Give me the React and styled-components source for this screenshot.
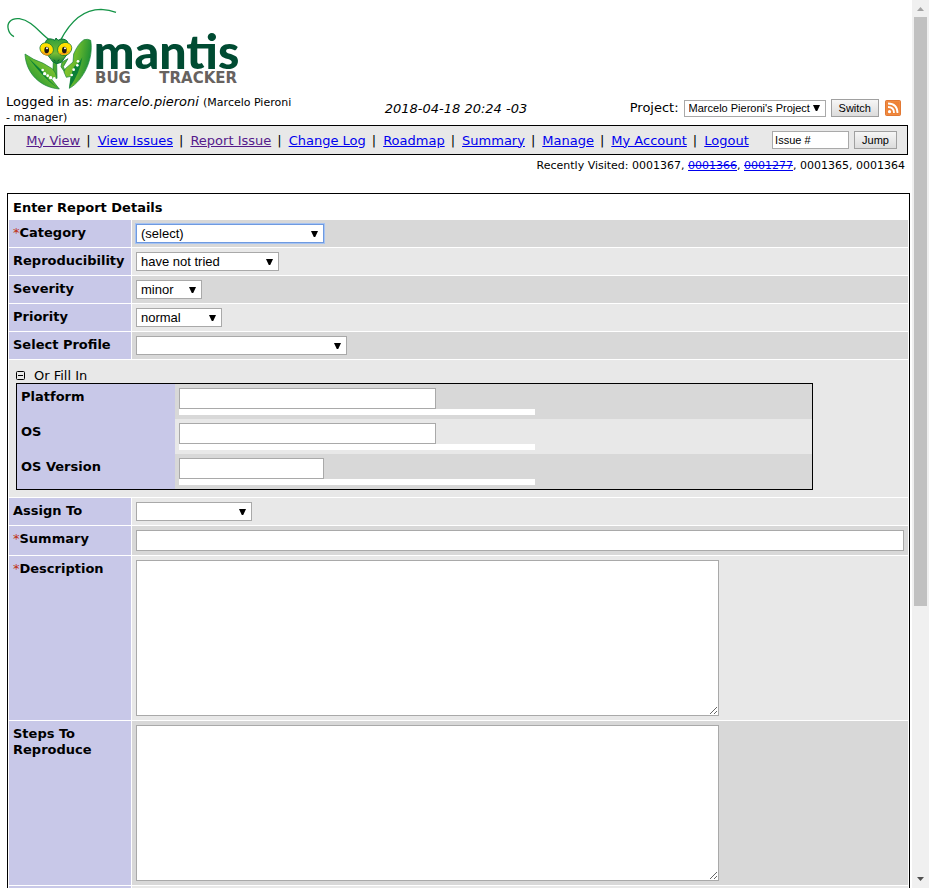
import React from "react";
import styled, { createGlobalStyle } from "styled-components";

const GlobalStyle = createGlobalStyle`
  *, *::before, *::after { box-sizing: border-box; }
  body {
    margin: 0;
    background: #fff;
    color: #000;
    font: 13px/16px Verdana, "DejaVu Sans", sans-serif;
  }
`;

const arrow =
  "url(\"data:image/svg+xml,%3Csvg xmlns='http://www.w3.org/2000/svg' width='7' height='6'%3E%3Cpath d='M0 0h7L4.2 6H2.800z'/%3E%3C/svg%3E\")";

const Shell = styled.div`
  display: flex;
  height: 100vh;
`;
const Pane = styled.div`
  flex: 1;
  min-width: 0;
  overflow: hidden auto;
  scrollbar-width: none;
`;
const Scrollbar = styled.div`
  flex: none;
  width: 17px;
  padding: 0 2px;
  background: #f0f0f0;
  display: flex;
  flex-direction: column;
`;
const ScrollArrow = styled.svg`
  flex: none;
  width: 13px;
  height: 17px;
  fill: ${(p) => p.$color};
`;
const ScrollTrack = styled.div`
  flex: 1;
`;
const ScrollThumb = styled.div`
  height: 69%;
  background: #c1c1c1;
`;

const LogoLink = styled.a`
  display: block;
  width: 236px;
  margin: 8px 6px 0;
`;
const LogoSvg = styled.svg`
  display: block;
  width: 236px;
  height: 84px;
`;
const LogoName = styled.text`
  font: 900 145px Lato, sans-serif;
  fill: #004b32;
`;
const LogoTag = styled.text`
  font: bold 45px "DejaVu Sans", sans-serif;
  fill: #67625f;
`;

const LoginBar = styled.div`
  display: grid;
  grid-template-columns: 33% 34% 33%;
  align-items: center;
  margin: 1px 4px 0;
  min-height: 31px;
`;
const LoginUser = styled.div`
  padding: 2px 8px 0 2px;
  line-height: 14px;
`;
const Small = styled.span`
  font-size: 11px;
`;
const LoginDate = styled.div`
  text-align: center;
  font-style: italic;
`;
const ProjectForm = styled.form`
  display: flex;
  align-items: center;
  justify-content: flex-end;
  gap: 5px;
  padding: 0 7px 2px 0;
  white-space: nowrap;
`;
const RssLink = styled.a`
  display: flex;
  padding-left: 1px;
`;

const NavBar = styled.nav`
  display: flex;
  align-items: center;
  height: 30px;
  margin: 0 4px;
  border: 1px solid #000;
  background: #e8e8e8;
`;
const NavLinks = styled.div`
  flex: 1;
  padding-top: 1px;
  text-align: center;
  white-space: nowrap;
`;
const NavLink = styled.a`
  color: ${(p) => (p.$visited ? "#551a8b" : "#0000ee")};
`;
const Divider = styled.span`
  margin: 0 7px 0 6px;
`;
const JumpForm = styled.form`
  display: flex;
  gap: 5px;
  padding: 0 10px 0 2px;
`;
const JumpInput = styled.input`
  width: 77px;
  height: 18px;
  padding: 0 2px;
  border: 1px solid #a9a9a9;
  font: 11px "Liberation Sans", Arial, sans-serif;
  color: #000;
`;
const Button = styled.button`
  height: 18px;
  padding: 0 7px;
  border: 1px solid #a0a0a0;
  background: linear-gradient(#f6f6f6, #dcdcdc);
  font: 11px/14px "Liberation Sans", Arial, sans-serif;
  color: #000;
`;

const Recent = styled.div`
  margin: 4px 7px 0;
  text-align: right;
  font-size: 11px;
  line-height: 14px;
`;
const Resolved = styled.a`
  color: #0000ee;
  text-decoration: underline line-through;
`;

const FormTable = styled.table`
  width: calc(100% - 9px);
  margin: 20px 2px 20px 7px;
  border: 1px solid #000;
  border-spacing: 1px;
  table-layout: fixed;
`;
const Title = styled.th`
  height: 24px;
  padding: 5px 4px 3px;
  text-align: left;
`;
const LabelCell = styled.th`
  width: ${(p) => p.$width || "122px"};
  padding: 5px 4px 4px;
  background: #c8c8e8;
  text-align: left;
  vertical-align: top;
`;
const ValueCell = styled.td`
  padding: 4px;
  background: ${(p) => (p.$dark ? "#d8d8d8" : "#e8e8e8")};
  vertical-align: top;
`;
const Required = styled.span`
  color: #c03010;
  font-weight: normal;
`;
const Select = styled.select`
  display: block;
  appearance: none;
  width: ${(p) => p.$width};
  height: ${(p) => (p.$small ? "17px" : "19px")};
  padding: 0 12px 0 4px;
  border: 1px solid ${(p) => (p.$focused ? "#6f9ae0" : "#a9a9a9")};
  border-radius: 0;
  background: #fff ${arrow} no-repeat right 5px center;
  box-shadow: ${(p) => (p.$focused ? "0 0 0 1px #a5c3f2" : "none")};
  font: ${(p) => (p.$small ? "11px" : "13px")} "Liberation Sans", Arial, sans-serif;
  color: #000;
`;
const TextInput = styled.input`
  display: block;
  width: ${(p) => p.$width};
  height: 21px;
  padding: 1px 3px;
  border: 1px solid #a9a9a9;
  font: 13px "Liberation Sans", Arial, sans-serif;
`;
const TextArea = styled.textarea`
  display: block;
  width: 583px;
  height: 156px;
  padding: 2px;
  border: 1px solid #a9a9a9;
  font: 13px "Liberation Mono", monospace;
`;

const FillCell = styled.td`
  padding: 8px 7px 7px;
  background: #e8e8e8;
`;
const FillToggle = styled.button`
  display: flex;
  align-items: center;
  gap: 9px;
  height: 15px;
  padding: 0;
  border: 0;
  background: none;
  font: inherit;
  color: #000;
`;
const FillTable = styled.table`
  width: 90%;
  border: 1px solid #000;
  border-spacing: 0;
  table-layout: fixed;
`;
const Suggestions = styled.div`
  width: 356px;
  height: 6px;
  background: #fff;
`;

function Logo() {
  return (
    <LogoLink href="#" aria-label="Mantis Bug Tracker">
      <LogoSvg viewBox="18 24 708 252">
        <defs>
          <linearGradient id="leafL" x1="0" y1="0.8" x2="0.8" y2="0">
            <stop offset="0" stopColor="#1d8f35" />
            <stop offset="0.5" stopColor="#5cb531" />
            <stop offset="1" stopColor="#9bcb2e" />
          </linearGradient>
          <linearGradient id="leafR" x1="0" y1="0" x2="1" y2="0.3">
            <stop offset="0" stopColor="#9bcb2e" />
            <stop offset="0.5" stopColor="#6cba2c" />
            <stop offset="1" stopColor="#1d9035" />
          </linearGradient>
          <linearGradient id="face" x1="0" y1="0" x2="0" y2="1">
            <stop offset="0" stopColor="#2d9e3a" />
            <stop offset="0.6" stopColor="#79bd35" />
            <stop offset="1" stopColor="#0d7d35" />
          </linearGradient>
        </defs>
        <path d="M152 122C121 103 99 62 58 56C31 53 20 71 25 88Q28 102 42 110" fill="none" stroke="#159447" strokeWidth="4" />
        <path d="M181 122C204 77 243 28 303 28Q329 29 348 37" fill="none" stroke="#159447" strokeWidth="4" />
        <path d="M160 184L170 190L171 233L163 236L159 208Z" fill="#4aa832" stroke="#0c7a34" strokeWidth="2" />
        <path d="M186 186L204 176L190 200L200 224L192 214L183 200Z" fill="#5cb531" stroke="#0c7a34" strokeWidth="2" />
        <path d="M75 162Q100 180 130 190L158 207Q168 218 171 235L152 234L178 267C120 262 78 220 75 162Z" fill="url(#leafL)" stroke="#128039" strokeWidth="2" />
        <path d="M84 172Q112 200 126 212Q142 240 178 267Q138 244 84 172Z" fill="#0b8036" />
        <path d="M252 119Q234 131 221 162L219 186L196 206L192 216L199 232L213 229L208 265C250 242 282 176 272 121Q263 116 252 119Z" fill="url(#leafR)" stroke="#128039" strokeWidth="2" />
        <path d="M247 172Q238 190 222 200Q211 226 208 265Q240 218 247 172Z" fill="#0b8036" />
        <g fill="#fff">
          <circle cx="128" cy="210" r="4" />
          <circle cx="134" cy="221" r="5" />
          <circle cx="143" cy="227" r="4" />
          <circle cx="152" cy="233" r="5" />
          <circle cx="163" cy="235" r="4" />
          <circle cx="234" cy="184" r="4" />
          <circle cx="232" cy="196" r="4" />
          <circle cx="221" cy="209" r="4" />
          <circle cx="215" cy="225" r="4" />
        </g>
        <path d="M139 121Q147 112 165 121L168 114L174 121Q190 112 202 124L209 153Q195 171 184 187L170 191L158 185Q150 169 126 151Z" fill="url(#face)" stroke="#08713a" strokeWidth="3" />
        <ellipse cx="140" cy="147" rx="21" ry="18" fill="#ffdf00" stroke="#087035" strokeWidth="2" transform="rotate(30 140 147)" />
        <ellipse cx="194" cy="147" rx="22" ry="19" fill="#ffdf00" stroke="#087035" strokeWidth="2" transform="rotate(-30 194 147)" />
        <path d="M122 151Q126 165 143 167L158 157Q139 166 122 151M211 151Q200 168 182 163L173 157Q195 162 211 151" fill="#f39a13" />
        <ellipse cx="140" cy="150" rx="7" ry="10" fill="#211b14" />
        <ellipse cx="193" cy="150" rx="7" ry="10" fill="#211b14" />
        <circle cx="141" cy="145" r="3" fill="#fff" />
        <circle cx="195" cy="145" r="3" fill="#fff" />
        <path d="M162 179L166 184M177 179L173 184" stroke="#075d2c" strokeWidth="3" />
        <LogoName x="281" y="208">mantis</LogoName>
        <LogoTag x="285" y="248">BUG</LogoTag>
        <LogoTag x="478" y="248">TRACKER</LogoTag>
      </LogoSvg>
    </LogoLink>
  );
}

function RssIcon() {
  return (
    <svg width="16" height="16" viewBox="0 0 16 16" aria-hidden="true">
      <rect width="16" height="16" rx="2" fill="#dd6b24" />
      <rect x="1" y="1" width="14" height="14" rx="1" fill="#ee8236" stroke="#f3a063" strokeWidth="0.5" />
      <circle cx="4.5" cy="11.7" r="1.6" fill="#fff" />
      <path d="M3 7Q9 7 9 13M3 3.5Q12.5 3.5 12.5 13" fill="none" stroke="#fff" strokeWidth="1.8" />
    </svg>
  );
}

const links = [
  ["My View", true],
  ["View Issues", false],
  ["Report Issue", true],
  ["Change Log", false],
  ["Roadmap", false],
  ["Summary", false],
  ["Manage", false],
  ["My Account", false],
  ["Logout", false],
];

function Row({ id, label, required, dark, children }) {
  return (
    <tr>
      <LabelCell scope="row">
        {required && <Required>*</Required>}
        <label htmlFor={id}>{label}</label>
      </LabelCell>
      <ValueCell $dark={dark}>{children}</ValueCell>
    </tr>
  );
}

function SelectRow({ id, value, width, focused, ...row }) {
  return (
    <Row id={id} {...row}>
      <Select id={id} $width={width} $focused={focused}>
        <option>{value}</option>
      </Select>
    </Row>
  );
}

function ProfileRow({ id, label, width, dark }) {
  return (
    <tr>
      <LabelCell scope="row" $width="158px">
        <label htmlFor={id}>{label}</label>
      </LabelCell>
      <ValueCell $dark={dark}>
        <TextInput id={id} type="text" $width={width} />
        <Suggestions />
      </ValueCell>
    </tr>
  );
}

export default function App() {
  return (
    <Shell>
      <GlobalStyle />
      <Pane>
        <Logo />
        <LoginBar>
          <LoginUser>
            Logged in as: <em>marcelo.pieroni</em> <Small>(Marcelo Pieroni - manager)</Small>
          </LoginUser>
          <LoginDate>2018-04-18 20:24 -03</LoginDate>
          <ProjectForm>
            <label htmlFor="project">Project:</label>
            <Select id="project" $small $width="142px">
              <option>Marcelo Pieroni's Project</option>
            </Select>
            <Button type="button">Switch</Button>
            <RssLink href="#" aria-label="RSS">
              <RssIcon />
            </RssLink>
          </ProjectForm>
        </LoginBar>
        <NavBar>
          <NavLinks>
            {links.map(([name, visited], i) => (
              <React.Fragment key={name}>
                {i > 0 && <Divider>|</Divider>}
                <NavLink href="#" $visited={visited}>
                  {name}
                </NavLink>
              </React.Fragment>
            ))}
          </NavLinks>
          <JumpForm>
            <JumpInput type="text" defaultValue="Issue #" aria-label="Issue #" />
            <Button type="button">Jump</Button>
          </JumpForm>
        </NavBar>
        <Recent>
          Recently Visited: 0001367, <Resolved href="#">0001366</Resolved>,{" "}
          <Resolved href="#">0001277</Resolved>, 0001365, 0001364
        </Recent>
        <FormTable>
          <colgroup>
            <col width="122" />
            <col />
          </colgroup>
          <tbody>
            <tr>
              <Title colSpan={2}>Enter Report Details</Title>
            </tr>
            <SelectRow id="category" label="Category" required dark focused value="(select)" width="188px" />
            <SelectRow id="reproducibility" label="Reproducibility" value="have not tried" width="143px" />
            <SelectRow id="severity" label="Severity" dark value="minor" width="66px" />
            <SelectRow id="priority" label="Priority" value="normal" width="86px" />
            <SelectRow id="profile" label="Select Profile" dark value="" width="211px" />
            <tr>
              <FillCell colSpan={2}>
                <FillToggle type="button">
                  <svg width="9" height="9" viewBox="0 0 9 9" aria-hidden="true">
                    <rect x="0.5" y="0.5" width="8" height="8" rx="1" fill="none" stroke="#000" />
                    <path d="M2 4.5h5" stroke="#000" />
                  </svg>
                  Or Fill In
                </FillToggle>
                <FillTable>
                  <tbody>
                    <ProfileRow id="platform" label="Platform" width="257px" dark />
                    <ProfileRow id="os" label="OS" width="257px" />
                    <ProfileRow id="os-version" label="OS Version" width="145px" dark />
                  </tbody>
                </FillTable>
              </FillCell>
            </tr>
            <SelectRow id="assign" label="Assign To" value="" width="116px" />
            <Row id="summary" label="Summary" required dark>
              <TextInput id="summary" type="text" $width="100%" />
            </Row>
            <Row id="description" label="Description" required>
              <TextArea id="description" />
            </Row>
            <Row id="steps" label="Steps To Reproduce" dark>
              <TextArea id="steps" />
            </Row>
            <tr>
              <LabelCell />
              <ValueCell>
                <TextArea aria-label="Additional Information" />
              </ValueCell>
            </tr>
          </tbody>
        </FormTable>
      </Pane>
      <Scrollbar aria-hidden="true">
        <ScrollArrow viewBox="0 0 13 17" $color="#a3a3a3">
          <path d="M3 11h7L6.500 7z" />
        </ScrollArrow>
        <ScrollTrack>
          <ScrollThumb />
        </ScrollTrack>
        <ScrollArrow viewBox="0 0 13 17" $color="#505050">
          <path d="M3 6h7L6.500 10z" />
        </ScrollArrow>
      </Scrollbar>
    </Shell>
  );
}
